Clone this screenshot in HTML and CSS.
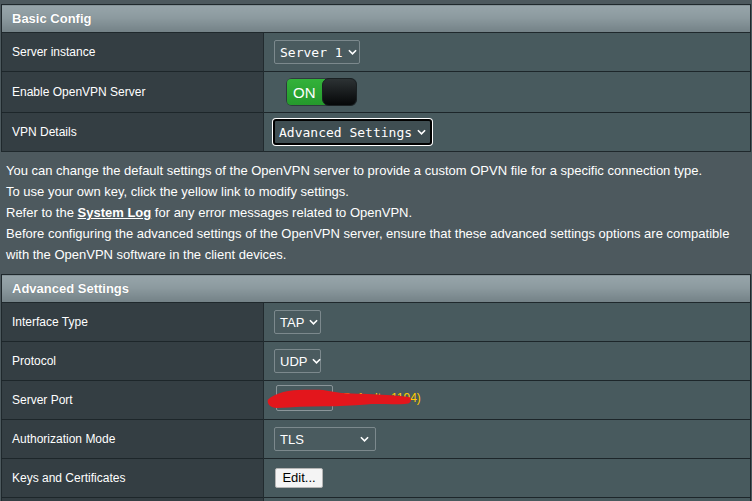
FILE: index.html
```html
<!DOCTYPE html>
<html>
<head>
<meta charset="utf-8">
<link rel="stylesheet" href="styles.css">
</head>
<body>
<div class="page">
  <table class="form">
    <thead>
      <tr><th colspan="2">Basic Config</th></tr>
    </thead>
    <tbody>
      <tr>
        <td class="label">Server instance</td>
        <td class="value"><span class="select mono w-server">Server 1<svg class="chev" viewBox="0 0 10 6"><path d="M1 1l4 4 4-4"/></svg></span></td>
      </tr>
      <tr class="tall">
        <td class="label">Enable OpenVPN Server</td>
        <td class="value"><span class="toggle"><span class="on">ON</span><span class="knob"></span></span></td>
      </tr>
      <tr>
        <td class="label">VPN Details</td>
        <td class="value"><span class="select mono focus w-adv">Advanced Settings<svg class="chev" viewBox="0 0 10 6"><path d="M1 1l4 4 4-4"/></svg></span></td>
      </tr>
    </tbody>
  </table>

  <div class="notes">
    <p>You can change the default settings of the OpenVPN server to provide a custom OPVN file for a specific connection type.</p>
    <p>To use your own key, click the yellow link to modify settings.</p>
    <p>Refer to the <a class="link">System Log</a> for any error messages related to OpenVPN.</p>
    <p>Before configuring the advanced settings of the OpenVPN server, ensure that these advanced settings options are compatible with the OpenVPN software in the client devices.</p>
  </div>

  <table class="form">
    <thead>
      <tr><th colspan="2">Advanced Settings</th></tr>
    </thead>
    <tbody>
      <tr>
        <td class="label">Interface Type</td>
        <td class="value"><span class="select sans w-small">TAP<svg class="chev" viewBox="0 0 10 6"><path d="M1 1l4 4 4-4"/></svg></span></td>
      </tr>
      <tr>
        <td class="label">Protocol</td>
        <td class="value"><span class="select sans w-small">UDP<svg class="chev" viewBox="0 0 10 6"><path d="M1 1l4 4 4-4"/></svg></span></td>
      </tr>
      <tr>
        <td class="label">Server Port</td>
        <td class="value">
          <span class="port">
            <span class="input"></span>
            <span class="hint">(Default : 1194)</span>
            <svg class="redact" viewBox="0 0 160 24"><path d="M2 14c8-8 24-11 40-11 12 0 18-1 30 2 14 3 30 2 45 3 14 1 26 1 40 3 3 2 2 6-1 7-16 2-30 0-46 1-16 1-30 2-46 2-18 0-36 1-52 2-7 0-11-4-10-9z"/></svg>
          </span>
        </td>
      </tr>
      <tr>
        <td class="label">Authorization Mode</td>
        <td class="value"><span class="select sans w-tls">TLS<svg class="chev" viewBox="0 0 10 6"><path d="M1 1l4 4 4-4"/></svg></span></td>
      </tr>
      <tr>
        <td class="label">Keys and Certificates</td>
        <td class="value"><span class="button">Edit...</span></td>
      </tr>
      <tr>
        <td class="label"></td>
        <td class="value"></td>
      </tr>
    </tbody>
  </table>
</div>
</body>
</html>
```

FILE: styles.css
```css
html, body {
  margin: 0;
  padding: 0;
  background: #4d595e;
  font-family: "Liberation Sans", Arial, sans-serif;
  color: #ffffff;
  overflow: hidden;
}

.page {
  padding: 4px 1px 0 1px;
  width: 750px;
}

.form {
  width: 750px;
  border-collapse: collapse;
  border: 1px solid #1f282c;
}

.form th {
  height: 27px;
  padding: 0 0 0 10px;
  text-align: left;
  font-size: 13px;
  font-weight: bold;
  color: #fff;
  background: linear-gradient(#97a5aa 0%, #8c9a9f 45%, #738186 100%);
  border-bottom: 1px solid #1f282c;
  text-shadow: 0 0 1px rgba(0,0,0,0.25);
}

.form td {
  height: 38px;
  border-top: 1px solid #1d262a;
  padding: 0;
  vertical-align: middle;
}

.form tr.tall td {
  height: 40px;
}

.form td.label {
  width: 251px;
  padding-left: 10px;
  background: #343e43;
  font-size: 12px;
  border-right: 1px solid #222b2f;
}

.form td.value {
  background: #485a5e;
  padding-left: 10px;
}

.select {
  display: inline-flex;
  align-items: center;
  box-sizing: border-box;
  height: 24px;
  padding: 0 6px 0 5px;
  border: 1px solid #7c898d;
  border-radius: 2px;
  background: #4a5b5f;
  color: #fff;
  justify-content: space-between;
  vertical-align: middle;
  white-space: nowrap;
}

.select.mono {
  font-family: "DejaVu Sans Mono", "Liberation Mono", monospace;
  font-size: 13px;
}

.select.sans {
  font-size: 13px;
}

.chev {
  flex-shrink: 0;
  width: 9px;
  height: 6px;
  margin-left: 5px;
  fill: none;
  stroke: #fff;
  stroke-width: 1.8;
}

.w-server { width: 86px; }
.w-small { width: 47px; }
.w-tls { width: 102px; }

.select.focus {
  height: 26px;
  width: 159px;
  margin-left: -1px;
  border: 2px solid #000;
  border-radius: 3px;
  box-shadow: 0 0 0 1px #fff;
  background: #3f4e52;
  padding-left: 4px;
}

.toggle {
  display: inline-flex;
  margin-left: 12px;
  height: 28px;
  width: 71px;
  vertical-align: middle;
  border-radius: 6px;
  background: #2e3a3e;
}

.toggle .on {
  display: flex;
  align-items: center;
  width: 38px;
  padding-left: 6px;
  box-sizing: border-box;
  background: linear-gradient(#33b23a, #25992c);
  border-radius: 4px 0 0 4px;
  margin: 1px 0 1px 1px;
  font-size: 15px;
  color: #fff;
}

.toggle .knob {
  flex: 1;
  margin-left: -3px;
  border-radius: 7px;
  background: linear-gradient(#2c3234, #050708);
  border: 1px solid #1a2022;
}

.notes {
  padding: 8px 5px 9px 5px;
  font-size: 13px;
  line-height: 21px;
}

.notes p {
  margin: 0;
}

.link {
  font-weight: bold;
  text-decoration: underline;
  color: #fff;
}

.port {
  position: relative;
  display: inline-flex;
  align-items: center;
  margin-left: 2px;
}

.port .input {
  display: inline-block;
  width: 57px;
  height: 26px;
  box-sizing: border-box;
  border: 1px solid #8a9599;
  border-radius: 2px;
}

.port .hint {
  margin-left: 6px;
  color: #ffcc00;
  font-size: 12px;
}

.redact {
  position: absolute;
  left: -10px;
  top: 1px;
  width: 146px;
  height: 24px;
  fill: #e3161c;
}

.button {
  display: inline-block;
  margin-left: 1px;
  box-sizing: border-box;
  height: 20px;
  width: 48px;
  line-height: 18px;
  text-align: center;
  font-size: 13px;
  color: #000;
  background: #f4f4f4;
  border: 1px solid #b5b5b5;
  border-radius: 2px;
}
```
